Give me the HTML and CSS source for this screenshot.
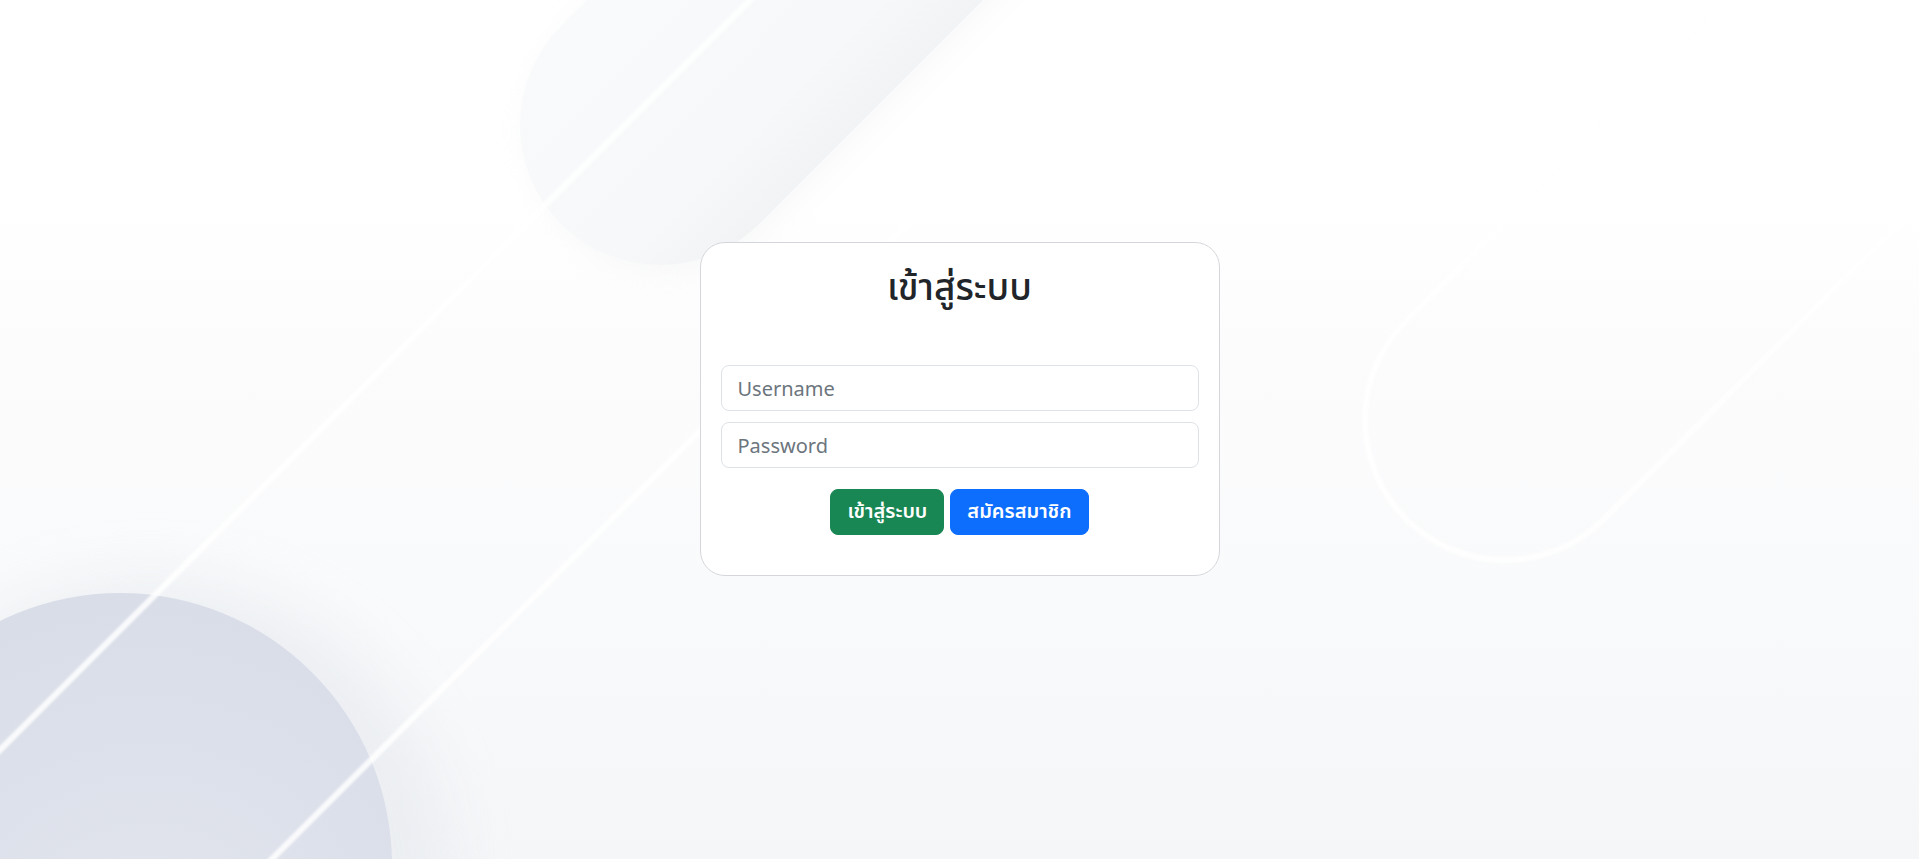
FILE: index.html
```html
<!DOCTYPE html>
<html lang="th">
<head>
<meta charset="utf-8">
<title>เข้าสู่ระบบ</title>
<link rel="stylesheet" href="styles.css">
</head>
<body>
<div class="backdrop" aria-hidden="true">
  <svg class="backdrop-art" viewBox="0 0 1919 859" preserveAspectRatio="none">
    <defs>
      <linearGradient id="pillFill" x1="0" y1="0" x2="0" y2="1">
        <stop offset="0" stop-color="#f9fafb"/>
        <stop offset="0.75" stop-color="#f7f8f9"/>
        <stop offset="1" stop-color="#f1f3f5"/>
      </linearGradient>
      <linearGradient id="pillFade" x1="0" y1="0" x2="1" y2="0">
        <stop offset="0" stop-color="#ffffff" stop-opacity="1"/>
        <stop offset="0.5" stop-color="#ffffff" stop-opacity="0.8"/>
        <stop offset="0.8" stop-color="#ffffff" stop-opacity="0"/>
      </linearGradient>
      <radialGradient id="circFill" cx="0.55" cy="0.7" r="0.7">
        <stop offset="0" stop-color="#e3e6ee"/>
        <stop offset="1" stop-color="#d9dde8"/>
      </radialGradient>
      <filter id="soft" x="-50%" y="-50%" width="200%" height="200%">
        <feGaussianBlur stdDeviation="28"/>
      </filter>
      <filter id="softer" x="-50%" y="-50%" width="200%" height="200%">
        <feGaussianBlur stdDeviation="14"/>
      </filter>
      <filter id="tiny" x="-10%" y="-10%" width="120%" height="120%">
        <feGaussianBlur stdDeviation="0.8"/>
      </filter>
    </defs>

    <!-- soft shadow under top pill -->
    <g transform="translate(666,131) rotate(-45)" filter="url(#softer)" opacity="0.3">
      <rect x="-140" y="-140" width="900" height="280" rx="140" fill="#e6e9ec"/>
    </g>
    <!-- top filled pill -->
    <g transform="translate(660,125) rotate(-45)">
      <rect x="-140" y="-140" width="900" height="280" rx="140" fill="url(#pillFill)"/>
    </g>

    <!-- halo around circle -->
    <circle cx="150" cy="880" r="300" fill="#e8ebf0" filter="url(#soft)" opacity="0.75"/>
    <!-- bottom-left circle -->
    <circle cx="120" cy="865" r="272" fill="url(#circFill)"/>

    <!-- diagonal white lines -->
    <g filter="url(#tiny)">
      <line x1="-10" y1="760" x2="760" y2="-10" stroke="#ffffff" stroke-width="6" opacity="0.85"/>
      <line x1="262" y1="869" x2="1141" y2="-10" stroke="#ffffff" stroke-width="6" opacity="0.85"/>
    </g>

    <!-- right outlined pill -->
    <g transform="translate(1505,420) rotate(-45)" filter="url(#tiny)">
      <rect x="-140" y="-140" width="1000" height="280" rx="140" fill="none" stroke="url(#pillFade)" stroke-width="6" opacity="0.85"/>
    </g>
  </svg>
</div>

<main class="page">
  <section class="card">
    <h2 class="card-title">เข้าสู่ระบบ</h2>
    <form class="login-form">
      <input class="field" type="text" placeholder="Username">
      <input class="field" type="password" placeholder="Password">
      <div class="actions">
        <button type="button" class="btn btn-success">เข้าสู่ระบบ</button>
        <button type="button" class="btn btn-primary">สมัครสมาชิก</button>
      </div>
    </form>
  </section>
</main>
</body>
</html>
```

FILE: styles.css
```css
* {
  box-sizing: border-box;
}

html, body {
  margin: 0;
  height: 100%;
}

body {
  font-family: "Noto Sans Thai", "Leelawadee UI", Tahoma, "Noto Sans", "Open Sans", sans-serif;
  color: #212529;
  background: linear-gradient(180deg, #ffffff 0%, #ffffff 24%, #fcfcfd 40%, #f9fafb 70%, #f5f6f8 100%);
  overflow: hidden;
}

.backdrop {
  position: fixed;
  inset: 0;
  z-index: 0;
}

.backdrop-art {
  width: 100%;
  height: 100%;
  display: block;
}

.page {
  position: relative;
  z-index: 1;
  padding-top: 242px;
  display: flex;
  justify-content: center;
}

.card {
  width: 520px;
  background: #ffffff;
  border: 1px solid #d5d6db;
  border-radius: 25px;
  padding: 24px 20px 40px;
}

.card-title {
  margin: 0;
  text-align: center;
  font-size: 37px;
  font-weight: 500;
  line-height: 1.2;
}

.login-form {
  margin-top: 54px;
  display: flex;
  flex-direction: column;
}

.field {
  display: block;
  width: 100%;
  height: 46px;
  padding: 3px 16px 0;
  font-family: inherit;
  font-size: 20px;
  color: #212529;
  background: #ffffff;
  border: 1px solid #dee2e6;
  border-radius: 8px;
  outline: none;
}

.field + .field {
  margin-top: 11px;
}

.field::placeholder {
  color: #6c757d;
}

.actions {
  margin-top: 21px;
  display: flex;
  justify-content: center;
  gap: 6px;
}

.btn {
  height: 46px;
  padding: 0 16px;
  font-family: inherit;
  font-size: 20px;
  font-weight: 600;
  color: #ffffff;
  border: 1px solid transparent;
  border-radius: 8px;
  cursor: pointer;
}

.btn-success {
  background: #198754;
  border-color: #198754;
}

.btn-primary {
  background: #0d6efd;
  border-color: #0d6efd;
}
```
